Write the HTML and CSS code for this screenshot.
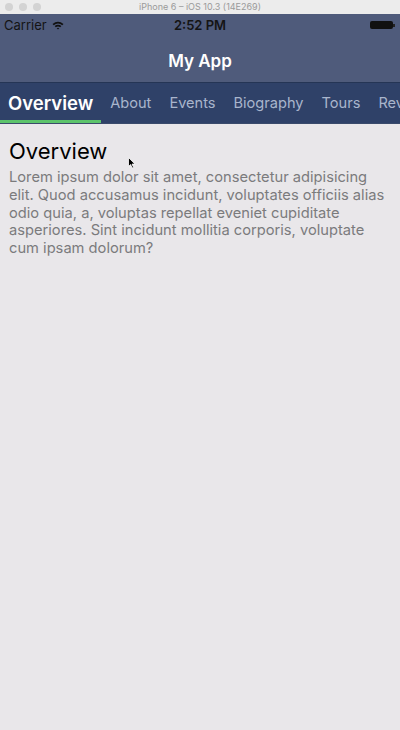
FILE: index.html
```html
<!DOCTYPE html>
<html>
<head>
<meta charset="utf-8">
<link rel="stylesheet" href="styles.css">
</head>
<body>
<div class="window">
  <div class="titlebar">
    <div class="lights"><span></span><span></span><span></span></div>
    <div class="wtitle">iPhone 6 – iOS 10.3 (14E269)</div>
  </div>
  <div class="status">
    <div class="carrier">Carrier
      <svg class="wifi" width="12" height="9" viewBox="0 0 12 9">
        <path d="M0.5 3 Q6 -1.5 11.5 3 L10.3 4.2 Q6 0.8 1.7 4.2 Z" fill="#111"/>
        <path d="M2.6 5.1 Q6 2.3 9.4 5.1 L8.2 6.3 Q6 4.6 3.8 6.3 Z" fill="#111"/>
        <path d="M4.7 7.2 Q6 6.2 7.3 7.2 L6 8.6 Z" fill="#111"/>
      </svg>
    </div>
    <div class="time">2:52 PM</div>
    <div class="battery"><span class="cell"></span><span class="tip"></span></div>
  </div>
  <div class="navbar">My App</div>
  <div class="tabs">
    <div class="tab active">Overview</div>
    <div class="tab">About</div>
    <div class="tab">Events</div>
    <div class="tab">Biography</div>
    <div class="tab">Tours</div>
    <div class="tab">Reviews</div>
  </div>
  <div class="content">
    <h1 class="heading">Overview</h1>
    <p class="body">Lorem ipsum dolor sit amet, consectetur adipisicing elit. Quod accusamus incidunt, voluptates officiis alias odio quia, a, voluptas repellat eveniet cupiditate asperiores. Sint incidunt mollitia corporis, voluptate cum ipsam dolorum?</p>
    <svg class="cursor" width="8" height="12" viewBox="0 0 8 12"><path d="M0.5 0.5 L0.5 9.5 L2.6 7.6 L4.2 11 L5.6 10.4 L4 7.1 L7 7.1 Z" fill="#000" stroke="#fff" stroke-width="0.8"/></svg>
  </div>
</div>
</body>
</html>
```
FILE: styles.css
```css
* { box-sizing: border-box; }
html, body { margin: 0; padding: 0; }
body {
  width: 400px;
  height: 730px;
  overflow: hidden;
  background: #e9e7ea;
  font-family: Inter, "Liberation Sans", Arial, sans-serif;
}
.window { display: flex; flex-direction: column; height: 730px; }
.titlebar {
  height: 14px;
  background: #ececec;
  position: relative;
  display: flex;
  align-items: center;
  justify-content: center;
}
.lights {
  position: absolute;
  left: 5px;
  top: 3px;
  display: flex;
  gap: 6px;
}
.lights span {
  width: 8px;
  height: 8px;
  border-radius: 50%;
  background: #d3d3d3;
}
.wtitle {
  font-size: 9px;
  color: #9a9a9a;
  line-height: 14px;
}
.status {
  height: 21px;
  background: #4f5b7b;
  display: flex;
  align-items: center;
  justify-content: space-between;
  padding: 1px 5px 0 4px;
  position: relative;
  font-size: 13px;
  color: #141414;
}
.carrier { display: flex; align-items: center; gap: 5px; }
.time {
  position: absolute;
  left: 0; right: 0;
  text-align: center;
  font-weight: 600;
  pointer-events: none;
}
.battery { display: flex; align-items: center; }
.battery .cell {
  width: 23px;
  height: 8px;
  background: #111;
  border-radius: 2px;
}
.battery .tip {
  width: 2px;
  height: 3px;
  background: #222;
}
.navbar {
  height: 47px;
  background: #4f5b7b;
  color: #fff;
  font-weight: 600;
  font-size: 17px;
  display: flex;
  align-items: center;
  justify-content: center;
  padding-top: 4px;
}
.tabs {
  height: 42px;
  background: #2f4168;
  border-top: 1px solid #253555;
  border-bottom: 1px solid #3a4a6b;
  display: flex;
  align-items: stretch;
  white-space: nowrap;
  overflow: hidden;
}
.tab {
  flex: none;
  padding: 2px 9px 0;
  display: flex;
  align-items: center;
  font-size: 14.6px;
  color: #a9b5cc;
  border-bottom: 3px solid transparent;
}
.tab.active {
  color: #fff;
  font-weight: 600;
  font-size: 18.5px;
  padding-left: 8px;
  padding-right: 8px;
  border-bottom-color: #5cc46b;
}
.content {
  flex: 1;
  padding: 14px 9px;
  position: relative;
}
.heading {
  margin: 0;
  font-weight: normal;
  font-size: 22px;
  line-height: 26px;
  color: #000;
}
.body {
  margin: 5px 0 0;
  font-size: 14.7px;
  line-height: 17.8px;
  color: #7b7b7d;
}
.cursor {
  position: absolute;
  left: 128px;
  top: 33px;
}
```
